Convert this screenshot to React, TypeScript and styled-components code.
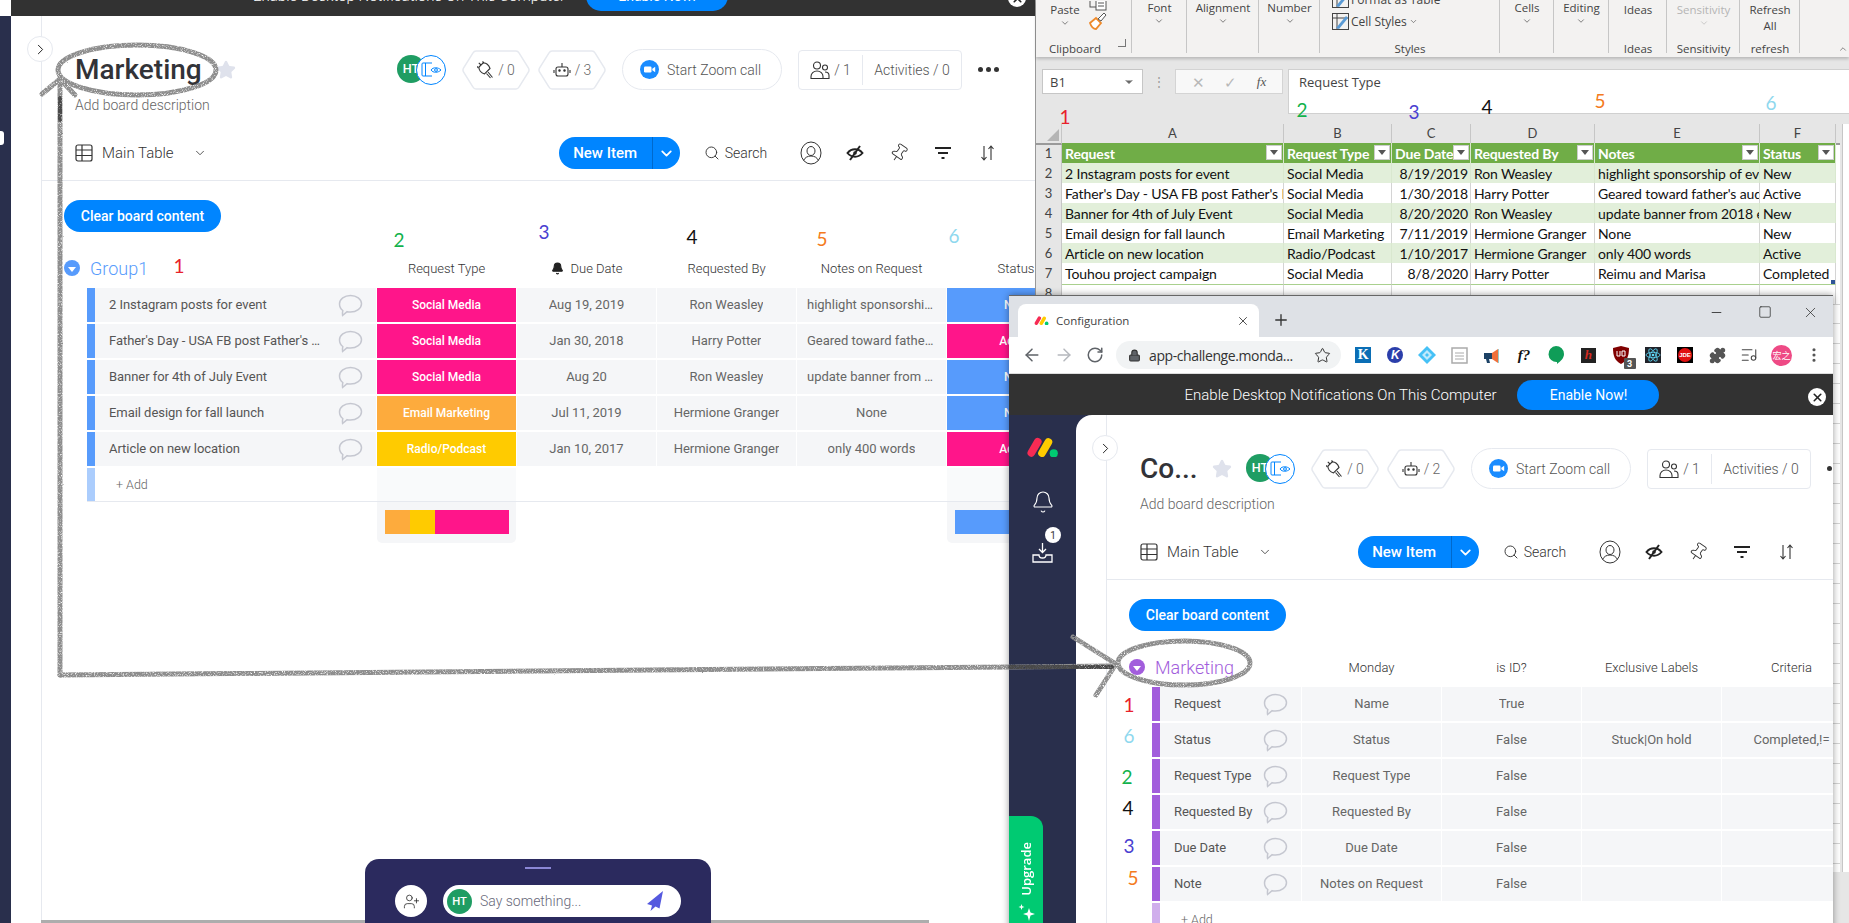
import React from "react";
import styled, { createGlobalStyle } from "styled-components";
import { ArrowLeft, ArrowRight, Bell, ChevronDown, ChevronRight, ChevronUp, EllipsisVertical, ListMusic, Lock, Minus, Pin, Plus, Puzzle, RotateCw, Search, Square, Star, UserPlus, X } from "lucide-react";

const Global = createGlobalStyle`
  html, body { margin: 0; padding: 0; width: 1849px; height: 923px; overflow: hidden; background: #fff; }
  * { box-sizing: border-box; }
  body { font-family: Roboto, "Noto Sans", sans-serif; }
`;

const Desktop = styled.div`position: relative; width: 1849px; height: 923px; overflow: hidden; background: #fff;`;

/* ---------- shared monday board ---------- */
const Banner = styled.div<{ $padRight: number; $padLeft: number; $closeRight: number }>`
  position: relative; flex: none; height: 41px; background: #323232; display: flex; align-items: center; justify-content: center;
  padding: 0 ${(p) => p.$padRight}px 0 ${(p) => p.$padLeft}px; gap: 21px; color: #fff; font-size: 15px; font-weight: 300;
  & > i { position: absolute; right: ${(p) => p.$closeRight}px; top: 14px; width: 18px; height: 18px; border-radius: 50%; background: #fff; color: #222; display: flex; align-items: center; justify-content: center; }
`;
const EnableButton = styled.span`
  width: 142px; height: 30px; border-radius: 15px; background: #0085ff; font-size: 14px; font-weight: 400; display: flex; align-items: center; justify-content: center;
`;
const NavRail = styled.div<{ $width: number }>`
  position: relative; flex: none; width: ${(p) => p.$width}px; background: #292f4c; display: flex; flex-direction: column; align-items: center; overflow: hidden; padding-top: 22px;
`;
const RailDot = styled.span`position: absolute; left: -3px; top: 115px; width: 7px; height: 14px; border-radius: 3px; background: #fff;`;
const RailIcon = styled.span<{ $top: number }>`position: relative; margin-top: ${(p) => p.$top}px; color: #fff; display: flex;`;
const RailBadge = styled.span`position: absolute; top: -16px; right: -8px; width: 16px; height: 16px; border-radius: 50%; background: #fff; color: #333; font-size: 10px; display: flex; align-items: center; justify-content: center;`;
const UpgradeTab = styled.div`
  margin-top: auto; align-self: flex-start; width: 34px; height: 119px; flex: none; background: #00ca72; border-radius: 0 12px 0 0; display: flex; flex-direction: column; align-items: center; padding-top: 26px; color: #fff; gap: 8px;
  & > span { writing-mode: vertical-rl; transform: rotate(180deg); font-size: 13px; font-family: "Open Sans", sans-serif; font-weight: 600; }
`;
const BoardFrame = styled.div<{ $round: number }>`
  flex: 1; min-width: 0; background: #fff; padding-left: 30px; border-radius: ${(p) => p.$round}px 0 0 0;
`;
const BoardMain = styled.div`position: relative; height: 100%; border-left: 1px solid #e6e9ef; padding-top: 33px;`;
const CollapseButton = styled.span`
  position: absolute; left: -15px; top: 20px; width: 26px; height: 26px; border-radius: 50%; background: #fff; border: 1px solid #e6e9ef; color: #222; display: flex; align-items: center; justify-content: center;
`;
const HeaderRow = styled.div`display: flex; align-items: center; height: 41px; padding-left: 33px; color: #666;`;
const TitleBlock = styled.div<{ $w: number }>`display: flex; align-items: center; width: ${(p) => p.$w}px; flex: none;`;
const Title = styled.h1`margin: 0 14px 0 0; font-size: 28px; font-weight: 500; color: #323338; line-height: 40px;`;
const Avatars = styled.div`position: relative; width: 49px; height: 30px; flex: none;`;
const AvatarDot = styled.span<{ $size: number }>`
  display: flex; align-items: center; justify-content: center; width: ${(p) => p.$size}px; height: ${(p) => p.$size}px; border-radius: 50%; background: #1f9d63; color: #fff; font-size: ${(p) => p.$size * 0.45}px; font-weight: 500; flex: none;
`;
const ViewBadge = styled.span`position: absolute; left: 19px; top: 0; width: 30px; height: 30px; border-radius: 50%; background: #fff; border: 1px solid #0085ff; display: flex; align-items: center; justify-content: center;`;
const HexBadge = styled.div<{ $first?: boolean }>`
  position: relative; width: 68px; height: 40px; flex: none; margin-left: ${(p) => (p.$first ? 16 : 8)}px; display: flex; align-items: center; justify-content: center; gap: 4px; font-size: 14px; font-weight: 300; color: #666;
  & > svg:first-child { position: absolute; inset: 0; }
`;
const ZoomPill = styled.div`
  margin-left: 16px; width: 160px; height: 41px; flex: none; border: 1px solid #e6e9ef; border-radius: 21px; display: flex; align-items: center; gap: 8px; padding-left: 17px; font-size: 14px; font-weight: 300; color: #555;
`;
const StatsBox = styled.div`
  margin-left: 16px; width: 164px; height: 40px; flex: none; border: 1px solid #e6e9ef; border-radius: 4px; display: flex; align-items: center; font-size: 14px; font-weight: 300; color: #555;
`;
const StatsPart = styled.div<{ $w: number; $line?: boolean }>`
  width: ${(p) => p.$w}px; height: 30px; display: flex; align-items: center; justify-content: center; gap: 4px; border-left: ${(p) => (p.$line ? "1px solid #e6e9ef" : "0")};
`;
const MoreDots = styled.div`margin-left: 16px; display: flex; gap: 3px; flex: none; & > i { width: 5px; height: 5px; border-radius: 50%; background: #333; }`;
const Description = styled.div`margin: 6px 0 0 33px; height: 18px; line-height: 18px; font-size: 14px; font-weight: 300; color: #666;`;
const Toolbar = styled.div`
  margin-top: 23px; padding: 0 0 11px 33px; height: 44px; border-bottom: 1px solid #e6e9ef; display: flex; align-items: flex-start; color: #333; width: 100%;
`;
const ViewSwitch = styled.div`display: flex; align-items: center; height: 32px; font-size: 15px; font-weight: 300; color: #333; gap: 9px; flex: none; & > svg:last-child { margin-left: 10px; }`;
const NewItem = styled.div<{ $left: number }>`
  margin-left: ${(p) => p.$left}px; width: 121px; height: 32px; flex: none; border-radius: 16px; background: #0085ff; color: #fff; display: flex; align-items: center; font-size: 15px; font-weight: 500;
  & > span { width: 94px; text-align: center; border-right: 1px solid #0069cc; line-height: 32px; }
  & > svg { margin-left: 5px; }
`;
const SearchBox = styled.div`margin-left: 24px; height: 32px; display: flex; align-items: center; gap: 5px; font-size: 14px; font-weight: 300; color: #333; flex: none;`;
const ToolIcons = styled.div`margin-left: 32px; display: flex; gap: 20px; height: 32px; align-items: center; flex: none;`;
const ToolIcon = styled.span`width: 24px; height: 24px; display: flex; align-items: center; justify-content: center; color: #333;`;
const ClearButton = styled.div`
  margin: 19px 0 0 22px; width: 157px; height: 32px; border-radius: 16px; background: #0085ff; color: #fff; font-size: 14px; font-weight: 500; display: flex; align-items: center; justify-content: center;
`;
const GroupRow = styled.div<{ $cols: string }>`
  display: grid; grid-template-columns: ${(p) => p.$cols}; column-gap: 1px; align-items: center; height: 24px; margin: 24px 0 8px 22px; width: max-content;
`;
const GroupTitle = styled.div<{ $color: string }>`
  display: flex; align-items: center; gap: 10px; font-size: 18px; font-weight: 300; color: ${(p) => p.$color};
`;
const GroupArrow = styled.span<{ $color: string }>`
  width: 16px; height: 16px; border-radius: 50%; background: ${(p) => p.$color}; display: flex; align-items: center; justify-content: center;
  &::after { content: ""; width: 0; height: 0; border-left: 4px solid transparent; border-right: 4px solid transparent; border-top: 5px solid #fff; margin-top: 2px; }
`;
const ColumnHead = styled.div`display: flex; align-items: center; justify-content: center; gap: 7px; font-size: 13px; font-weight: 300; color: #333; white-space: nowrap;`;
const Rows = styled.div`margin-left: 45px; display: flex; flex-direction: column; gap: 2px; width: max-content;`;
const Row = styled.div<{ $cols: string }>`display: grid; grid-template-columns: ${(p) => p.$cols}; column-gap: 1px; height: 34px;`;
const NameCell = styled.div<{ $bar: string; $gap: number }>`
  display: flex; align-items: center; justify-content: space-between; border-left: 8px solid ${(p) => p.$bar}; background: #f5f6f8; padding: 0 13px 0 14px; font-size: 13px; color: #555; min-width: 0;
  & > span { flex: 1; min-width: 0; overflow: hidden; white-space: nowrap; text-overflow: ellipsis; padding: 0 ${(p) => p.$gap}px 2px 0; letter-spacing: -0.05px; }
`;
const TextCell = styled.div`
  background: #f5f6f8; font-size: 13px; color: #666; display: flex; align-items: center; justify-content: center; padding: 0 10px 1px; min-width: 0;
  & > span { overflow: hidden; white-space: nowrap; text-overflow: ellipsis; }
`;
const StatusCell = styled.div<{ $bg: string }>`
  background: ${(p) => p.$bg}; color: #fff; font-size: 12px; font-weight: 500; display: flex; align-items: center; justify-content: center;
`;
const AddRow = styled.div<{ $cols: string }>`display: grid; grid-template-columns: ${(p) => p.$cols}; column-gap: 1px; height: 34px; border-bottom: 1px solid #e6e9ef;`;
const AddName = styled.div<{ $bar: string }>`border-left: 8px solid ${(p) => p.$bar}; padding-left: 21px; display: flex; align-items: center; font-size: 12.5px; font-weight: 300; color: #666;`;
const AddTint = styled.div<{ $on?: boolean }>`background: ${(p) => (p.$on ? "#f9fafb" : "transparent")};`;
const SummaryRow = styled.div<{ $cols: string }>`display: grid; grid-template-columns: ${(p) => p.$cols}; column-gap: 1px; height: 41px; margin-top: -2px;`;
const SummaryCell = styled.div<{ $on?: boolean }>`background: ${(p) => (p.$on ? "#f5f6f8" : "transparent")}; border-radius: 0 0 5px 5px; padding: 8px 7px 8px 8px;`;
const Battery = styled.div`display: flex; height: 24px; & > i { display: block; }`;
const BatteryPart = styled.i<{ $bg: string; $grow: number }>`background: ${(p) => p.$bg}; flex: ${(p) => p.$grow};`;

/* ---------- floating chat ---------- */
const ChatPanel = styled.div`
  position: absolute; left: 365px; bottom: 0; width: 346px; height: 64px; background: #2b2a5e; border-radius: 14px 14px 0 0; display: flex; align-items: flex-start; padding: 26px 0 0 30px; gap: 16px;
  &::before { content: ""; position: absolute; left: 160px; top: 8px; width: 26px; height: 2px; background: #8b87d6; }
`;
const ChatAdd = styled.span`width: 32px; height: 32px; border-radius: 50%; background: #fff; color: #222; display: flex; align-items: center; justify-content: center;`;
const ChatInput = styled.div`width: 238px; height: 32px; border-radius: 16px; background: #fff; display: flex; align-items: center; padding: 0 17px 0 4px; gap: 8px; font-size: 14px; font-weight: 300; color: #676879; & > svg { margin-left: auto; }`;
const PageScroll = styled.div`position: absolute; left: 41px; bottom: 0; width: 888px; height: 3px; background: #adadad;`;

/* ---------- windows ---------- */
const LeftWindow = styled.div`
  position: absolute; left: 0; top: -25px; width: 1036px; height: 948px; background: #fff; display: flex; flex-direction: column; overflow: hidden; border-right: 1px solid #999;
`;
const LeftBannerWrap = styled.div`margin-left: 11px;`;
const WindowBody = styled.div`flex: 1; min-height: 0; display: flex; background: #292f4c;`;
const ChromeWindow = styled.div`
  position: absolute; left: 1009px; top: 295px; width: 824px; height: 640px; background: #fff; border-top: 1px solid #666; display: flex; flex-direction: column; overflow: hidden; box-shadow: 0 0 7px rgba(0,0,0,.4); z-index: 2;
`;
const TabStrip = styled.div`flex: none; height: 41px; background: #dee1e6; display: flex; align-items: flex-end; padding-left: 9px; color: #333;`;
const Tab = styled.div`width: 241px; height: 33px; background: #fff; border-radius: 8px 8px 0 0; display: flex; align-items: center; padding: 0 9px 0 16px; gap: 7px; font-size: 11.5px; font-family: "Open Sans", sans-serif; color: #444; & > svg:last-child { margin-left: auto; }`;
const NewTab = styled.span`margin: 0 0 8px 13px; display: flex;`;
const WindowControls = styled.div`margin: 0 14px 17px auto; display: flex; gap: 30px; align-items: center; color: #222; height: 16px; & > svg:first-child { margin-right: 4px; }`;
const AddressBar = styled.div`flex: none; height: 37px; background: #fff; border-bottom: 1px solid #ddd; display: flex; align-items: center; padding-left: 13px; gap: 12px; color: #5f6368;`;
const Omnibox = styled.div`width: 225px; height: 28px; border-radius: 14px; background: #f1f3f4; display: flex; align-items: center; padding: 0 10px 0 12px; gap: 8px; font-size: 14px; font-family: "Open Sans", sans-serif; letter-spacing: -0.4px; color: #333; & > svg:last-child { margin-left: auto; }`;
const ExtensionRow = styled.div`margin-left: -6px; display: flex; align-items: center;`;
const Ext = styled.span`position: relative; width: 32.2px; height: 24px; display: flex; align-items: center; justify-content: center;`;
const ExtK = styled.span`width: 16px; height: 16px; background: #0b6eb5; color: #fff; font: 700 14px "Liberation Serif", serif; display: flex; align-items: center; justify-content: center;`;
const ExtKRound = styled.span`width: 16px; height: 16px; border-radius: 50%; background: #2b3eaa; color: #fff; font: italic 700 12px "Liberation Sans", sans-serif; display: flex; align-items: center; justify-content: center;`;
const ExtF = styled.span`font: italic 700 15px "Liberation Serif", serif; color: #111;`;
const ExtH = styled.span`width: 15px; height: 15px; background: #222; color: #d42a20; font: italic 700 13px "Liberation Serif", serif; display: flex; align-items: center; justify-content: center;`;
const ExtCount = styled.span`position: absolute; right: 1px; bottom: -2px; width: 12px; height: 11px; background: #555; color: #fff; font-size: 9px; font-weight: 700; border-radius: 1px; display: flex; align-items: center; justify-content: center;`;
const ExtJde = styled.span`width: 16px; height: 16px; background: #000; display: flex; align-items: center; justify-content: center; & > b { width: 14px; height: 14px; border-radius: 50%; background: #e01010; color: #fff; font: 700 6px "Liberation Sans", sans-serif; display: flex; align-items: center; justify-content: center; }`;
const ExtProfile = styled.span`width: 21px; height: 21px; border-radius: 50%; background: #ee4a85; color: #fff; font: 9px "Noto Sans CJK SC", sans-serif; display: flex; align-items: center; justify-content: center;`;
const ChromeBody = styled.div`flex: 1; min-height: 0; display: flex; background: #292f4c;`;

/* ---------- excel ---------- */
const ExcelWindow = styled.div`position: absolute; left: 1036px; top: 0; width: 813px; height: 923px; background: #e6e6e6; display: flex; flex-direction: column; font-family: Lato, "Open Sans", sans-serif;`;
const Ribbon = styled.div`position: relative; flex: none; height: 57px; background: #f3f2f1; display: flex; box-shadow: 0 2px 3px rgba(0,0,0,.2); z-index: 1; font-family: "Open Sans", sans-serif; font-size: 11.5px; color: #444;`;
const RibbonCaret = styled.span`position: absolute; right: 1px; bottom: 3px; display: flex; color: #555;`;
const RibbonGroup = styled.div<{ $w: number; $last?: boolean }>`
  position: relative; flex: none; width: ${(p) => p.$w}px; height: 57px; display: flex; flex-direction: column; align-items: center; overflow: hidden;
  &::after { content: ""; position: absolute; right: 0; top: 0; bottom: 4px; width: 1px; background: ${(p) => (p.$last ? "transparent" : "#c6c6c6")}; }
`;
const RibbonTop = styled.div<{ $off?: boolean; $drop?: number }>`
  flex: 1; min-height: 0; display: flex; flex-direction: column; align-items: center; color: ${(p) => (p.$off ? "#b5b5b5" : "#444")}; line-height: 16px; white-space: nowrap; padding-top: ${(p) => p.$drop ?? 0}px;
`;
const WideTop = styled(RibbonTop)`align-self: stretch; align-items: flex-start;`;
const RibbonLabel = styled.div`flex: none; height: 16px; line-height: 15px; white-space: nowrap;`;
const ClipboardLabel = styled(RibbonLabel)`margin-right: 18px;`;
const PasteColumn = styled.div`display: flex; gap: 8px; height: 36px; align-items: flex-start; margin: 1px 0 0 14px;`;
const PasteStack = styled.div`display: flex; flex-direction: column; align-items: center; line-height: 16px; margin-top: 1px; width: 30px;`;
const BrushStack = styled.div`display: flex; flex-direction: column; align-items: center; gap: 1px;`;
const CornerMark = styled.span`position: absolute; right: 6px; bottom: 10px; width: 8px; height: 8px; border-left: 1px solid #777; border-top: 1px solid #777; transform: rotate(180deg);`;
const StylesLines = styled.div`display: flex; flex-direction: column; margin-left: 12px;`;
const StyleLine = styled.div<{ $top?: number }>`display: flex; align-items: center; gap: 2px; height: 17px; margin-top: ${(p) => p.$top ?? 0}px; white-space: nowrap; font-size: 12px;`;
const FormulaRow = styled.div`flex: none; height: 67px; display: flex; align-items: flex-start; padding: 12px 0 0 6px; background: #e6e6e6; font-family: "Open Sans", sans-serif; color: #444;`;
const NameBox = styled.div`width: 101px; height: 25px; background: #fff; border: 1px solid #c6c6c6; display: flex; align-items: center; justify-content: space-between; padding: 0 7px; font-size: 13px;`;
const GripDots = styled.div`width: 32px; height: 25px; display: flex; align-items: center; justify-content: center; color: #999; font-size: 12px;`;
const FxBox = styled.div`width: 108px; height: 25px; background: #f8f8f8; border: 1px solid #d4d4d4; display: flex; align-items: center; justify-content: space-around; padding: 0 6px; color: #b8b8b8; font-size: 15px; & > em { color: #555; font: italic 13px "Liberation Serif", serif; }`;
const FormulaInput = styled.div`margin-left: 5px; flex: 1; height: 45px; background: #fff; border: 1px solid #d0d0d0; border-right: 0; padding: 2px 10px; font-size: 13px; line-height: 20px; color: #444;`;
const SheetWrap = styled.div`flex: 1; min-height: 0; display: flex; background: #e6e6e6;`;
const Sheet = styled.div`flex: 1; min-height: 0; height: 748px; background: repeating-linear-gradient(#fff 0 19px, #d4d4d4 19px 20px); overflow: hidden;`;
const SheetRow = styled.div`display: grid; grid-template-columns: 26px 222px 108px 79px 124px 165px 76px 6px; height: 20px;`;
const ColHeadRow = styled(SheetRow)`height: 19px;`;
const ColLetter = styled.div`background: #e6e6e6; border-right: 1px solid #c6c6c6; border-bottom: 2px solid #9a9a9a; text-align: center; font-size: 13px; line-height: 19px; color: #444; position: relative;`;
const Corner = styled(ColLetter)`&::after { content: ""; position: absolute; right: 2px; bottom: 2px; border-left: 12px solid transparent; border-bottom: 12px solid #b5b5b5; }`;
const RowNum = styled.div`background: #e6e6e6; border-right: 1px solid #c6c6c6; border-bottom: 1px solid #c6c6c6; text-align: center; font-size: 13px; line-height: 21px; color: #444;`;
const Cell = styled.div<{ $kind: "head" | "band" | "plain"; $right?: boolean }>`
  position: relative; padding: 0 2px 0 3px; font-size: 14px; line-height: 21px; white-space: nowrap; overflow: hidden; letter-spacing: -0.12px; color: ${(p) => (p.$kind === "head" ? "#fff" : "#111")};
  font-weight: ${(p) => (p.$kind === "head" ? 700 : 400)};
  text-align: ${(p) => (p.$right ? "right" : "left")};
  background: ${(p) => (p.$kind === "head" ? "#70ad47" : p.$kind === "band" ? "#e2efda" : "#fff")};
  border-bottom: 1px solid #a9d08e;
  border-right: 1px solid ${(p) => (p.$kind === "plain" ? "#d4d4d4" : "#d9e8cf")};
`;
const FilterButton = styled.span`
  position: absolute; right: 1px; top: 2px; width: 16px; height: 15px; background: #fff; border: 1px solid #ccc; display: flex; align-items: center; justify-content: center;
  &::after { content: ""; border-left: 4px solid transparent; border-right: 4px solid transparent; border-top: 5px solid #555; }
`;
const CornerTick = styled.span`position: absolute; right: 0; bottom: 0; width: 4px; height: 4px; background: #2f5597;`;
const GridCell = styled.div`background: #fff; border-right: 1px solid #d4d4d4; border-bottom: 1px solid #d4d4d4;`;
const VScroll = styled.div`width: 7px; height: 748px; flex: none; margin-left: 2px; background: #fff; border-left: 1px solid #c6c6c6;`;

/* ---------- pencil annotations ---------- */
const InkLayer = styled.svg`position: absolute; inset: 0; width: 1849px; height: 923px; z-index: 5; pointer-events: none;`;
const Mark = styled.span<{ $x: number; $y: number; $c: string }>`
  position: absolute; z-index: 6; left: ${(p) => p.$x}px; top: ${(p) => p.$y}px; transform: translate(-50%, -50%); color: ${(p) => p.$c}; font: 400 19px Lato, sans-serif; line-height: 1;
`;

/* ---------- icons ---------- */
const Bubble = () => (
  <svg width="25" height="23" viewBox="0 0 25 23" fill="none" stroke="#c5c7d0" strokeWidth="1.5">
    <path d="M12.5 1.5c6 0 11 3.6 11 8.3s-5 8.3-11 8.3c-1.2 0-2.3-.1-3.4-.4L4.6 21.5c-.4-1.6-.1-3.6.2-5C2.5 14.900 1.500 12.500 1.500 9.800c0-4.700 5-8.300 11-8.300z" />
  </svg>
);
const TableIcon = () => (
  <svg width="18" height="18" viewBox="0 0 18 18" fill="none" stroke="#333" strokeWidth="1.2"><rect x="1" y="1" width="16" height="16" rx="2" /><path d="M1 6h16M1 11.500h16M7 1v16" /></svg>
);
const PlugIcon = () => (
  <svg width="17" height="18" viewBox="0 0 17 18" fill="none" stroke="#333" strokeWidth="1.1"><path d="M4 4L1.800 1.800M1.500 7L0 5.500M7 2L5.500.5" /><path d="M2 6L6 2c3-.5 6 2 7 5.500l-5.500 5.500C4 12 1.500 9 2 6z" /><path d="M11 11l4.500 5.500M9.500 12.500l4 4.500" /></svg>
);
const ViewIcon = () => (
  <svg width="21" height="15" viewBox="0 0 21 15" fill="none" stroke="#0085ff" strokeWidth="1"><path d="M11 1H2a1 1 0 0 0-1 1v11a1 1 0 0 0 1 1h9" /><path d="M4.500 1v13" /><path d="M10 8c2-3 7-3 10 0-3 3-8 3-10 0z" /><circle cx="15" cy="8" r="1.400" /></svg>
);
const BotIcon = () => (
  <svg width="18" height="16" viewBox="0 0 18 16" fill="none" stroke="#333" strokeWidth="1.1"><rect x="3" y="5" width="12" height="9" rx="2" /><path d="M9 1v4M1 8v3M17 8v3" /><circle cx="6.500" cy="8.500" r=".7" fill="#333" /><circle cx="11.500" cy="8.500" r=".7" fill="#333" /></svg>
);
const ZoomIcon = () => (
  <svg width="19" height="19" viewBox="0 0 19 19"><circle cx="9.500" cy="9.500" r="9.500" fill="#1a8cff" /><rect x="4" y="6.500" width="7.500" height="6" rx="1.200" fill="#fff" /><path d="M12.300 8.700l2.900-2v5.600l-2.900-2z" fill="#fff" /></svg>
);
const PeopleIcon = () => (
  <svg width="20" height="20" viewBox="0 0 20 20" fill="none" stroke="#333" strokeWidth="1.1"><circle cx="7" cy="5.500" r="3.500" /><path d="M1 18.500v-2c0-3 2.500-5.500 6-5.500s6 2.500 6 5.500v2z" /><circle cx="15" cy="7.500" r="2.500" /><path d="M13 18.500h6v-3c0-2-1.500-3.500-4-3.500" /></svg>
);
const PersonCircle = () => (
  <svg width="22" height="24" viewBox="0 0 22 24" fill="none" stroke="#333" strokeWidth="1"><ellipse cx="11" cy="12" rx="10" ry="11" /><ellipse cx="11" cy="10" rx="4" ry="4.500" /><path d="M3.500 19.500c1.500-3 4-4.500 7.500-4.500s6 1.500 7.500 4.500" /></svg>
);
const EyeOff = () => (
  <svg width="18" height="16" viewBox="0 0 18 16" fill="none" stroke="#222" strokeWidth="2"><path d="M1.500 8c4-5 11-5 15 0-4 5-11 5-15 0z" /><path d="M14 1L4 15" /><circle cx="9" cy="8" r="1.800" fill="#222" stroke="none" /></svg>
);
const FilterIcon = () => (
  <svg width="16" height="14" viewBox="0 0 16 14" stroke="#222" strokeWidth="2"><path d="M0 2h16M3 7h10" /><path d="M6.500 12h3" /></svg>
);
const SortIcon = () => (
  <svg width="13" height="16" viewBox="0 0 13 16" fill="none" stroke="#333" strokeWidth="1.1"><path d="M3 1v14M.5 12L3 15l2.500-3M10 15V1M7.500 4L10 1l2.500 3" /></svg>
);
const MondayLogo = ({ size = 32 }: { size?: number }) => (
  <svg width={size} height={size * 0.62} viewBox="0 0 32 20">
    <rect x="4.500" y="0" width="7.500" height="20" rx="3.700" fill="#f62b54" transform="rotate(30 8 10)" />
    <rect x="15" y="0" width="7.500" height="20" rx="3.700" fill="#ffcc00" transform="rotate(30 18 10)" />
    <circle cx="27" cy="16" r="4" fill="#00ca72" />
  </svg>
);
const Sparkle = () => (
  <svg width="17" height="17" viewBox="0 0 17 17" fill="#fff"><path d="M11 4l1.500 4.500L17 10l-4.500 1.500L11 17l-1.500-5.500L5 10l4.500-1.500zM3.500 0l.8 2.200L6.500 3l-2.200.8L3.500 6l-.8-2.200L.5 3l2.200-.8z" /></svg>
);
const SendIcon = () => (
  <svg width="17" height="21" viewBox="0 0 17 21" fill="#5559df"><path d="M16 0L0 13l5 1.500L3.500 20 8.500 15.500l4 2z" /></svg>
);
const Hex = () => (
  <svg width="68" height="40" viewBox="0 0 68 40" fill="none" stroke="#e6e9ef" strokeWidth="1.5"><path d="M14 1h40q2 0 3 2l9.500 15q1 2 0 4L57 37q-1 2-3 2H14q-2 0-3-2L1.500 22q-1-2 0-4L11 3q1-2 3-2z" /></svg>
);
const BrushIcon = () => (
  <svg width="19" height="19" viewBox="0 0 19 19" fill="none"><path d="M2 11l6-5 5 5-5 6c-3 0-5-3-6-6z" fill="#fff" stroke="#ee8a2b" strokeWidth="1.800" /><path d="M10 7l6-6 2 2-5 6z" fill="#fff" stroke="#555" strokeWidth="1" /></svg>
);
const ClipIcon = () => (
  <svg width="18" height="10" viewBox="0 0 18 10" fill="none" stroke="#555"><rect x="1" y="-6" width="8" height="12" /><rect x="7" y="-4" width="10" height="13" fill="#fff" /><path d="M9 2h6M9 5h6" /></svg>
);
const CellStylesIcon = () => (
  <svg width="17" height="17" viewBox="0 0 17 17" fill="none"><rect x=".5" y=".5" width="16" height="16" stroke="#444" /><path d="M.5 5h16M5 .5v16" stroke="#444" /><path d="M4 15L14 3l2 2L7 16z" fill="#5b9bd5" /></svg>
);
const DiamondExt = () => (
  <svg width="18" height="18" viewBox="0 0 18 18"><path d="M9 0l9 9-9 9-9-9z" fill="#46c1f6" /><path d="M9 4l5 5-5 5-5-5z" fill="#bfeafc" /><path d="M9 7l2 2-2 2-2-2z" fill="#46c1f6" /></svg>
);
const DocExt = () => (
  <svg width="17" height="17" viewBox="0 0 17 17" fill="#fff" stroke="#aaa" strokeWidth="1.500"><rect x="1" y="1" width="15" height="15" /><path d="M4 6h9M4 9h9M4 12h9" strokeWidth="1" /></svg>
);
const HornExt = () => (
  <svg width="18" height="16" viewBox="0 0 18 16"><path d="M1 6h8v6H1z" fill="#1c4266" /><path d="M3 12h3l1 4H4z" fill="#1c4266" /><path d="M9 6l6-4v14l-6-4z" fill="#f0703b" /><path d="M15 2h1v14h-1z" fill="#9cc" /></svg>
);
const TalkExt = () => (
  <svg width="16" height="19" viewBox="0 0 16 19"><path d="M8 0a8 8 0 0 1 8 8c0 4-3 7-7 10v-2a8 8 0 0 1-1-16z" fill="#0f9d58" /></svg>
);
const ShieldExt = () => (
  <svg width="16" height="18" viewBox="0 0 16 18"><path d="M8 0l8 2c0 8-2 13-8 16C2 15 0 10 0 2z" fill="#800000" /><path d="M4 5v5h3V5M9 5h3v5H9z" fill="none" stroke="#fff" strokeWidth="1" /></svg>
);
const ReactExt = () => (
  <svg width="16" height="16" viewBox="0 0 16 16"><rect width="16" height="16" fill="#20232a" /><g fill="none" stroke="#61dafb" strokeWidth=".8"><ellipse cx="8" cy="8" rx="7" ry="2.700" /><ellipse cx="8" cy="8" rx="7" ry="2.700" transform="rotate(60 8 8)" /><ellipse cx="8" cy="8" rx="7" ry="2.700" transform="rotate(120 8 8)" /></g><circle cx="8" cy="8" r="1.300" fill="#61dafb" /></svg>
);

/* ---------- board data + component ---------- */
type Status = { label: string; bg: string };
const PINK = "#ff158a", ORANGE = "#fdab3d", YELLOW = "#ffcb00", BLUE = "#579bfc", PURPLE = "#a25ddc";
const social: Status = { label: "Social Media", bg: PINK };
const neu: Status = { label: "New", bg: BLUE };
const active: Status = { label: "Active", bg: PINK };

type CellValue = string | Status;
interface BoardProps {
  title: string; titleWidth: number; bots: number; newItemLeft: number; round: number; color: string; addColor: string; nameGap: number;
  group: string; heads: React.ReactNode[]; cols: number[]; rows: { name: string; cells: CellValue[] }[]; summary?: boolean;
}
const Board = ({ title, titleWidth, bots, newItemLeft, round, color, addColor, nameGap, group, heads, cols, rows, summary }: BoardProps) => {
  const rest = cols.slice(1).map((c) => `${c}px`).join(" ");
  const rowCols = `${cols[0] + 8}px ${rest}`;
  const groupCols = `${cols[0] + 31}px ${rest}`;
  return (
    <BoardFrame $round={round}>
      <BoardMain>
        <CollapseButton><ChevronRight size={17} strokeWidth={1.4} /></CollapseButton>
        <HeaderRow>
          <TitleBlock $w={titleWidth}><Title>{title}</Title><Star size={20} fill="#dfe2ec" stroke="#dfe2ec" /></TitleBlock>
          <Avatars><AvatarDot $size={28}>HT</AvatarDot><ViewBadge><ViewIcon /></ViewBadge></Avatars>
          <HexBadge $first><Hex /><PlugIcon /><span>/ 0</span></HexBadge>
          <HexBadge><Hex /><BotIcon /><span>/ {bots}</span></HexBadge>
          <ZoomPill><ZoomIcon /><span>Start Zoom call</span></ZoomPill>
          <StatsBox>
            <StatsPart $w={63}><PeopleIcon /><span>/ 1</span></StatsPart>
            <StatsPart $w={99} $line><span>Activities / 0</span></StatsPart>
          </StatsBox>
          <MoreDots><i /><i /><i /></MoreDots>
        </HeaderRow>
        <Description>Add board description</Description>
        <Toolbar>
          <ViewSwitch><TableIcon /><span>Main Table</span><ChevronDown size={14} strokeWidth={1.4} /></ViewSwitch>
          <NewItem $left={newItemLeft}><span>New Item</span><ChevronDown size={17} strokeWidth={2.5} /></NewItem>
          <SearchBox><Search size={16} strokeWidth={1.4} /><span>Search</span></SearchBox>
          <ToolIcons>
            <ToolIcon><PersonCircle /></ToolIcon>
            <ToolIcon><EyeOff /></ToolIcon>
            <ToolIcon><Pin size={20} strokeWidth={1.1} transform="rotate(35)" /></ToolIcon>
            <ToolIcon><FilterIcon /></ToolIcon>
            <ToolIcon><SortIcon /></ToolIcon>
          </ToolIcons>
        </Toolbar>
        <ClearButton>Clear board content</ClearButton>
        <GroupRow $cols={groupCols}>
          <GroupTitle $color={color}><GroupArrow $color={color} /><span>{group}</span></GroupTitle>
          {heads.map((h, i) => <ColumnHead key={i}>{h}</ColumnHead>)}
        </GroupRow>
        <Rows>
          {rows.map((r) => (
            <Row key={r.name} $cols={rowCols}>
              <NameCell $bar={color} $gap={nameGap}><span>{r.name}</span><Bubble /></NameCell>
              {r.cells.map((c, i) =>
                typeof c === "string"
                  ? <TextCell key={i}><span>{c}</span></TextCell>
                  : <StatusCell key={i} $bg={c.bg}>{c.label}</StatusCell>)}
            </Row>
          ))}
          <AddRow $cols={rowCols}>
            <AddName $bar={addColor}>+ Add</AddName>
            {rows[0].cells.map((c, i) => <AddTint key={i} $on={typeof c !== "string"} />)}
          </AddRow>
          {summary && (
            <SummaryRow $cols={rowCols}>
              <div />
              {rows[0].cells.map((c, i) => (
                <SummaryCell key={i} $on={typeof c !== "string"}>
                  {typeof c !== "string" && (i === 0
                    ? <Battery><BatteryPart $bg={ORANGE} $grow={20} /><BatteryPart $bg={YELLOW} $grow={20} /><BatteryPart $bg={PINK} $grow={60} /></Battery>
                    : <Battery><BatteryPart $bg={BLUE} $grow={100} /></Battery>)}
                </SummaryCell>
              ))}
            </SummaryRow>
          )}
        </Rows>
      </BoardMain>
    </BoardFrame>
  );
};

const leftRows = [
  { name: "2 Instagram posts for event", cells: [social, "Aug 19, 2019", "Ron Weasley", "highlight sponsorship of event", neu] },
  { name: "Father's Day - USA FB post Father's Day", cells: [social, "Jan 30, 2018", "Harry Potter", "Geared toward father's audience", active] },
  { name: "Banner for 4th of July Event", cells: [social, "Aug 20", "Ron Weasley", "update banner from 2018 event", neu] },
  { name: "Email design for fall launch", cells: [{ label: "Email Marketing", bg: ORANGE }, "Jul 11, 2019", "Hermione Granger", "None", neu] },
  { name: "Article on new location", cells: [{ label: "Radio/Podcast", bg: YELLOW }, "Jan 10, 2017", "Hermione Granger", "only 400 words", active] },
] as { name: string; cells: CellValue[] }[];
const rightRows = [
  { name: "Request", cells: ["Name", "True", "", ""] },
  { name: "Status", cells: ["Status", "False", "Stuck|On hold", "Completed,!="] },
  { name: "Request Type", cells: ["Request Type", "False", "", ""] },
  { name: "Requested By", cells: ["Requested By", "False", "", ""] },
  { name: "Due Date", cells: ["Due Date", "False", "", ""] },
  { name: "Note", cells: ["Notes on Request", "False", "", ""] },
] as { name: string; cells: CellValue[] }[];

const sheet: { c: string[]; kind: "band" | "plain" }[] = [
  { kind: "band", c: ["2 Instagram posts for event", "Social Media", "8/19/2019", "Ron Weasley", "highlight sponsorship of event", "New"] },
  { kind: "plain", c: ["Father's Day - USA FB post Father's Day", "Social Media", "1/30/2018", "Harry Potter", "Geared toward father's audience", "Active"] },
  { kind: "band", c: ["Banner for 4th of July Event", "Social Media", "8/20/2020", "Ron Weasley", "update banner from 2018 event", "New"] },
  { kind: "plain", c: ["Email design for fall launch", "Email Marketing", "7/11/2019", "Hermione Granger", "None", "New"] },
  { kind: "band", c: ["Article on new location", "Radio/Podcast", "1/10/2017", "Hermione Granger", "only 400 words", "Active"] },
  { kind: "plain", c: ["Touhou project campaign", "Social Media", "8/8/2020", "Harry Potter", "Reimu and Marisa", "Completed"] },
];
const sheetHeads = ["Request", "Request Type", "Due Date", "Requested By", "Notes", "Status"];

const RibbonSimple = ({ w, top, label, chevron, off, last, drop }: { w: number; top: string[]; label?: string; chevron?: boolean; off?: boolean; last?: boolean; drop?: number }) => (
  <RibbonGroup $w={w} $last={last}>
    <RibbonTop $off={off} $drop={drop}>
      {top.map((t) => <span key={t}>{t}</span>)}
      {chevron && <ChevronDown size={10} strokeWidth={1.6} />}
    </RibbonTop>
    <RibbonLabel>{label ?? "\u00a0"}</RibbonLabel>
  </RibbonGroup>
);

const marks: [string, number, number, string][] = [
  ["1", 179, 265, "#e8212b"], ["2", 399, 239, "#12b24c"], ["3", 544, 231, "#4a3fd1"], ["4", 692, 236, "#111"], ["5", 822, 238, "#f47a20"], ["6", 954, 235, "#8fd8ee"],
  ["1", 1065, 116, "#e8212b"], ["2", 1302, 109, "#12b24c"], ["3", 1414, 111, "#4a3fd1"], ["4", 1487, 106, "#111"], ["5", 1600, 100, "#f47a20"], ["6", 1771, 102, "#8fd8ee"],
  ["1", 1129, 704, "#e8212b"], ["6", 1129, 735, "#8fd8ee"], ["2", 1127, 776, "#12b24c"], ["4", 1128, 807, "#111"], ["3", 1129, 845, "#4a3fd1"], ["5", 1133, 877, "#f47a20"],
];

export default function App() {
  return (
    <Desktop>
      <Global />
      <ExcelWindow>
        <Ribbon>
          <RibbonGroup $w={96}>
            <WideTop>
              <PasteColumn>
                <PasteStack><span>Paste</span><ChevronDown size={10} strokeWidth={1.6} /></PasteStack>
                <BrushStack><ClipIcon /><BrushIcon /></BrushStack>
              </PasteColumn>
            </WideTop>
            <ClipboardLabel>Clipboard</ClipboardLabel>
            <CornerMark />
          </RibbonGroup>
          <RibbonSimple w={55} top={["Font"]} chevron />
          <RibbonSimple w={72} top={["Alignment"]} chevron />
          <RibbonSimple w={61} top={["Number"]} chevron />
          <RibbonGroup $w={180}>
            <WideTop>
              <StylesLines>
                <StyleLine $top={-9}><CellStylesIcon /><span>Format as Table</span></StyleLine>
                <StyleLine $top={5}><CellStylesIcon /><span>Cell Styles</span><ChevronDown size={9} strokeWidth={1.6} /></StyleLine>
              </StylesLines>
            </WideTop>
            <RibbonLabel>Styles</RibbonLabel>
          </RibbonGroup>
          <RibbonSimple w={54} top={["Cells"]} chevron />
          <RibbonSimple w={55} top={["Editing"]} chevron />
          <RibbonSimple w={58} top={["Ideas"]} label="Ideas" drop={2} />
          <RibbonSimple w={73} top={["Sensitivity"]} chevron off label="Sensitivity" drop={2} />
          <RibbonSimple w={60} top={["Refresh", "All"]} label="refresh" drop={2} />
          <RibbonCaret><ChevronUp size={10} strokeWidth={1.6} /></RibbonCaret>
        </Ribbon>
        <FormulaRow>
          <NameBox><span>B1</span><ChevronDown size={12} fill="#666" stroke="#666" /></NameBox>
          <GripDots>⋮</GripDots>
          <FxBox><span>✕</span><span>✓</span><em>fx</em></FxBox>
          <FormulaInput>Request Type</FormulaInput>
        </FormulaRow>
        <SheetWrap>
          <Sheet>
            <ColHeadRow>
              <Corner />
              {["A", "B", "C", "D", "E", "F"].map((l) => <ColLetter key={l}>{l}</ColLetter>)}
              <ColLetter />
            </ColHeadRow>
            <SheetRow>
              <RowNum>1</RowNum>
              {sheetHeads.map((h) => <Cell key={h} $kind="head">{h}<FilterButton /></Cell>)}
              <GridCell />
            </SheetRow>
            {sheet.map((r, i) => (
              <SheetRow key={i}>
                <RowNum>{i + 2}</RowNum>
                {r.c.map((t, j) => (
                  <Cell key={j} $kind={r.kind} $right={j === 2}>{t}{i === 5 && j === 5 && <CornerTick />}</Cell>
                ))}
                <GridCell />
              </SheetRow>
            ))}
            <SheetRow>
              <RowNum>8</RowNum>
              {[0, 1, 2, 3, 4, 5, 6].map((k) => <GridCell key={k} />)}
            </SheetRow>
          </Sheet>
          <VScroll />
        </SheetWrap>
      </ExcelWindow>

      <LeftWindow>
        <LeftBannerWrap>
          <Banner $padRight={65} $padLeft={0} $closeRight={9}>
            <span>Enable Desktop Notifications On This Computer</span>
            <EnableButton>Enable Now!</EnableButton>
            <i><X size={13} strokeWidth={3} /></i>
          </Banner>
        </LeftBannerWrap>
        <WindowBody>
          <NavRail $width={11}><RailDot /></NavRail>
          <Board
            title="Marketing" titleWidth={322} bots={3} newItemLeft={352} round={0} color={BLUE} addColor="#abcdfd" nameGap={15} group="Group1" summary
            heads={["Request Type", <><Bell size={13} fill="#222" stroke="#222" /><span>Due Date</span></>, "Requested By", "Notes on Request", "Status"]}
            cols={[281, 139, 139, 139, 149, 138]} rows={leftRows}
          />
        </WindowBody>
        <PageScroll />
        <ChatPanel>
          <ChatAdd><UserPlus size={17} strokeWidth={1.1} /></ChatAdd>
          <ChatInput><AvatarDot $size={25}>HT</AvatarDot><span>Say something...</span><SendIcon /></ChatInput>
        </ChatPanel>
      </LeftWindow>

      <ChromeWindow>
        <TabStrip>
          <Tab><MondayLogo size={15} /><span>Configuration</span><X size={14} strokeWidth={1.6} /></Tab>
          <NewTab><Plus size={18} strokeWidth={1.8} /></NewTab>
          <WindowControls><Minus size={15} strokeWidth={1.3} /><Square size={14} strokeWidth={1.2} /><X size={17} strokeWidth={1} /></WindowControls>
        </TabStrip>
        <AddressBar>
          <ArrowLeft size={20} strokeWidth={1.8} />
          <ArrowRight size={20} strokeWidth={1.8} color="#b5b8bd" />
          <RotateCw size={18} strokeWidth={2} />
          <Omnibox><Lock size={13} fill="#5f6368" /><span>app-challenge.monda...</span><Star size={17} strokeWidth={1.4} /></Omnibox>
          <ExtensionRow>
            <Ext><ExtK>K</ExtK></Ext>
            <Ext><ExtKRound>K</ExtKRound></Ext>
            <Ext><DiamondExt /></Ext>
            <Ext><DocExt /></Ext>
            <Ext><HornExt /></Ext>
            <Ext><ExtF>f?</ExtF></Ext>
            <Ext><TalkExt /></Ext>
            <Ext><ExtH>h</ExtH></Ext>
            <Ext><ShieldExt /><ExtCount>3</ExtCount></Ext>
            <Ext><ReactExt /></Ext>
            <Ext><ExtJde><b>JDE</b></ExtJde></Ext>
            <Ext><Puzzle size={17} fill="#555" stroke="#555" /></Ext>
            <Ext><ListMusic size={18} strokeWidth={1.4} color="#444" /></Ext>
            <Ext><ExtProfile>宏之</ExtProfile></Ext>
            <Ext><EllipsisVertical size={18} strokeWidth={2.2} color="#555" /></Ext>
          </ExtensionRow>
        </AddressBar>
        <Banner $padRight={0} $padLeft={2} $closeRight={7}>
          <span>Enable Desktop Notifications On This Computer</span>
          <EnableButton>Enable Now!</EnableButton>
          <i><X size={13} strokeWidth={3} /></i>
        </Banner>
        <ChromeBody>
          <NavRail $width={67}>
            <MondayLogo size={33} />
            <RailIcon $top={33}><Bell size={24} strokeWidth={1.1} /></RailIcon>
            <RailIcon $top={29}>
              <svg width="21" height="20" viewBox="0 0 21 20" fill="none" stroke="#fff" strokeWidth="1.3"><path d="M10.500 0v9M7 6l3.500 3.500L14 6" /><path d="M1 12h6c0 2 1.500 3 3.500 3s3.500-1 3.500-3h6v7H1z" /></svg>
              <RailBadge>1</RailBadge>
            </RailIcon>
            <UpgradeTab><span>Upgrade</span><Sparkle /></UpgradeTab>
          </NavRail>
          <Board
            title="Co..." titleWidth={106} bots={2} newItemLeft={86} round={16} color={PURPLE} addColor="#d0aeec" nameGap={4} group="Marketing"
            heads={["Monday", "is ID?", "Exclusive Labels", "Criteria"]}
            cols={[141, 139, 139, 139, 139]} rows={rightRows}
          />
        </ChromeBody>
      </ChromeWindow>

      <InkLayer viewBox="0 0 1849 923" fill="none">
        <defs>
          <filter id="pencil" x="0" y="0" width="1849" height="923" filterUnits="userSpaceOnUse">
            <feTurbulence type="fractalNoise" baseFrequency="1.1" numOctaves="2" result="n" />
            <feDisplacementMap in="SourceGraphic" in2="n" scale="1.600" result="d" />
            <feColorMatrix in="n" type="matrix" values="0 0 0 0 0  0 0 0 0 0  0 0 0 0 0  0 0 0 -3 2.500" result="m" />
            <feComposite in="d" in2="m" operator="in" />
          </filter>
        </defs>
        <g filter="url(#pencil)" stroke="#8d8d8d" strokeWidth="5" strokeLinecap="round" strokeLinejoin="round">
          <ellipse cx="137" cy="70" rx="79" ry="25" />
          <path d="M60 675L60 82" />
          <path d="M42 94L60 79L75 95" />
          <path d="M60 675L1012 667L1113 666" />
          <path d="M1073 637L1116 664L1096 695" />
          <ellipse cx="1184" cy="663" rx="66" ry="22" />
        </g>
        <g filter="url(#pencil)" stroke="#4a4a4a" strokeWidth="4" strokeLinecap="round">
          <path d="M60 98V120" />
          <path d="M1010 667H1112" />
        </g>
      </InkLayer>
      {marks.map(([t, x, y, c], i) => <Mark key={i} $x={x} $y={y} $c={c}>{t}</Mark>)}
    </Desktop>
  );
}
